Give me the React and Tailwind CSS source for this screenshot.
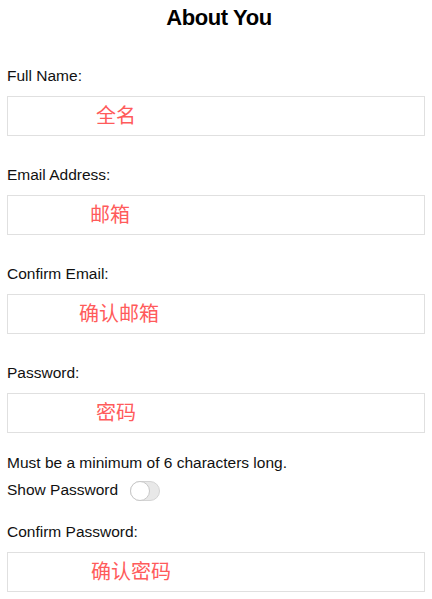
import { useState } from 'react';

const fields = [
  { label: 'Full Name:', hint: '全名', pad: 'pl-[88px]' },
  { label: 'Email Address:', hint: '邮箱', pad: 'pl-[82px]' },
  { label: 'Confirm Email:', hint: '确认邮箱', pad: 'pl-[71px]' },
  { label: 'Password:', hint: '密码', pad: 'pl-[88px]' },
];

function Field({ label, hint, pad, className = '' }) {
  return (
    <div className={className}>
      <label className="block text-[15.5px] leading-[19px] text-[#111]">{label}</label>
      <div
        className={`mt-[11px] flex h-[40px] items-center border border-[#e0e0e0] ${pad} text-[20px] text-[#ff5b5b]`}
        style={{ fontFamily: '"Liberation Sans", "Noto Sans CJK SC", sans-serif' }}
      >
        {hint}
      </div>
    </div>
  );
}

export default function App() {
  const [show, setShow] = useState(false);

  return (
    <div
      className="min-h-[599px] bg-white px-[7px] text-[#111]"
      style={{ fontFamily: '"Liberation Sans", Arial, sans-serif' }}
    >
      <h1 className="pl-[6px] pt-[5px] text-center text-[22px] font-bold leading-[25px] tracking-[-0.4px] text-black">
        About You
      </h1>

      <div className="mt-[36px]">
        {fields.map((f, i) => (
          <Field key={f.label} {...f} className={i === 0 ? '' : 'mt-[29px]'} />
        ))}
      </div>

      <p className="mt-[21px] text-[15.5px] leading-[17px]">Must be a minimum of 6 characters long.</p>

      <div className="mt-[9px] flex items-start gap-[12px]">
        <span className="pt-[1px] text-[15.5px] leading-[17px]">Show Password</span>
        <button
          onClick={() => setShow(!show)}
          className="relative mt-[1px] h-[20px] w-[30px] rounded-full border border-[#d4d4d4] bg-[#e8e8e8]"
        >
          <span
            className={`absolute top-[-1px] h-[20px] w-[20px] rounded-full border border-[#c8c8c8] bg-white ${show ? 'left-[9px]' : 'left-[-1px]'}`}
          />
        </button>
      </div>

      <Field label="Confirm Password:" hint="确认密码" pad="pl-[83px]" className="mt-[21px]" />
    </div>
  );
}
